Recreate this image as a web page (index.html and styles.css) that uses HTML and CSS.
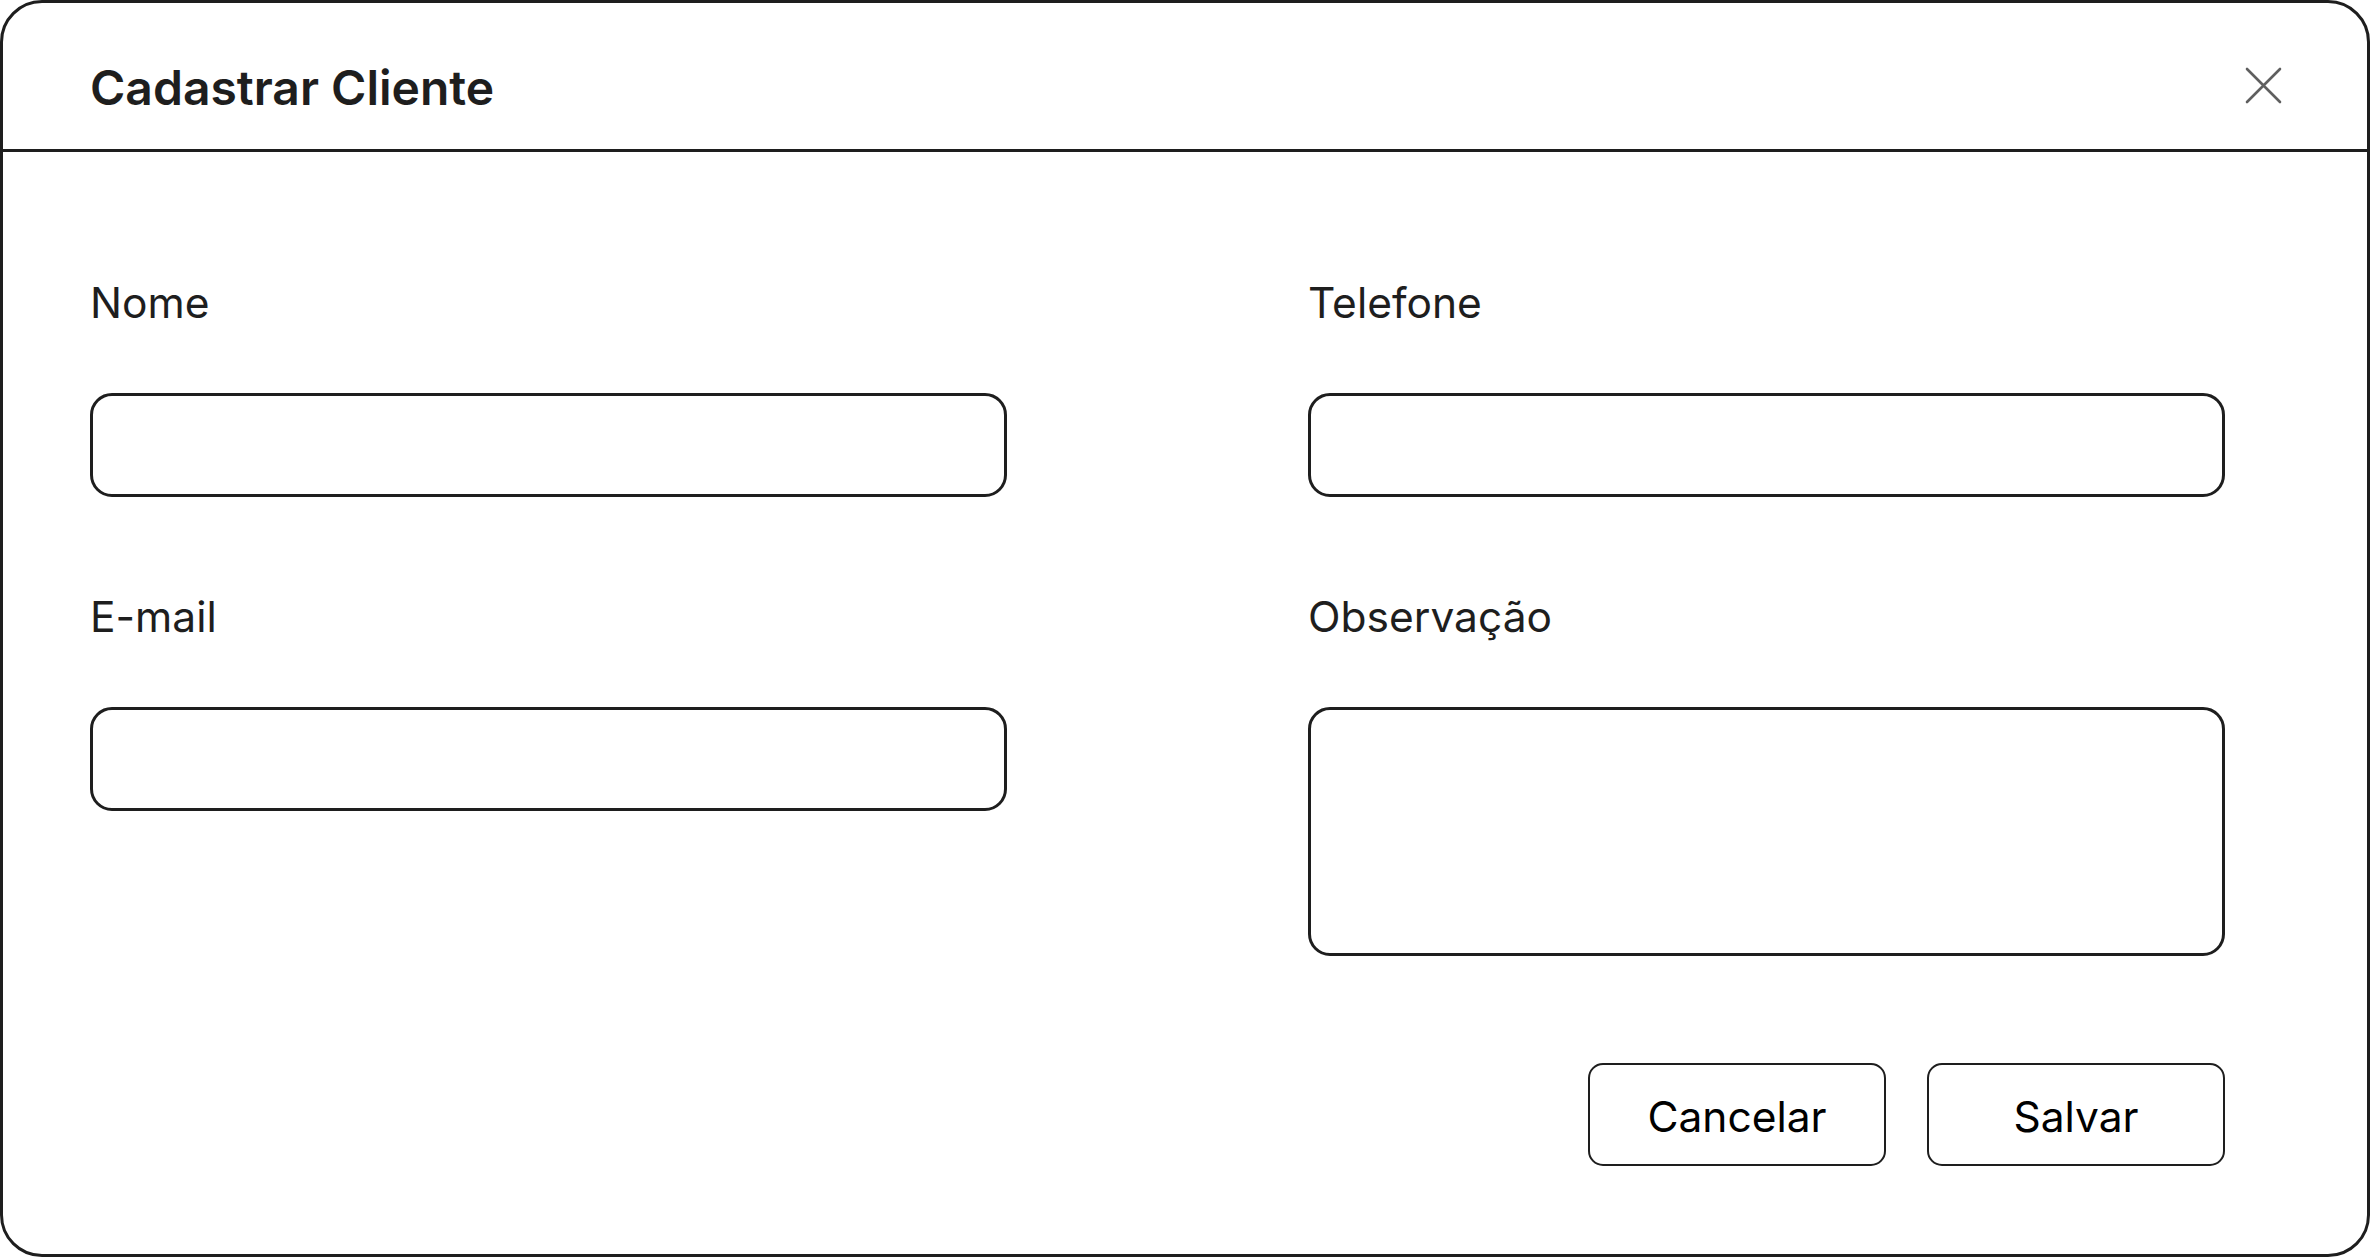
FILE: index.html
```html
<!DOCTYPE html>
<html lang="pt-BR">
<head>
<meta charset="utf-8">
<title>Cadastrar Cliente</title>
<link rel="stylesheet" href="styles.css">
</head>
<body>
<div class="modal">
  <header class="modal-header">
    <h1 class="modal-title">Cadastrar Cliente</h1>
    <button class="close-btn" type="button" aria-label="Fechar">
      <svg width="37" height="37" viewBox="0 0 37 37" fill="none">
        <path d="M2 2L35 35M35 2L2 35" stroke="#5f5f5f" stroke-width="2.6" stroke-linecap="round"/>
      </svg>
    </button>
  </header>
  <form class="modal-body">
    <div class="fields">
      <div class="field">
        <label class="field-label" for="nome">Nome</label>
        <input class="field-input" id="nome" type="text">
      </div>
      <div class="field">
        <label class="field-label" for="telefone">Telefone</label>
        <input class="field-input" id="telefone" type="tel">
      </div>
      <div class="field">
        <label class="field-label" for="email">E-mail</label>
        <input class="field-input" id="email" type="email">
      </div>
      <div class="field">
        <label class="field-label" for="obs">Observação</label>
        <textarea class="field-input field-textarea" id="obs"></textarea>
      </div>
    </div>
    <div class="actions">
      <button class="btn" type="button">Cancelar</button>
      <button class="btn" type="submit">Salvar</button>
    </div>
  </form>
</div>
</body>
</html>
```
FILE: styles.css
```css
html, body {
  margin: 0;
  height: 100%;
}

body {
  font-family: Inter, "Noto Sans", "Liberation Sans", sans-serif;
  background: #ffffff;
  color: #1e1e1e;
}

.modal {
  box-sizing: border-box;
  height: 100vh;
  border: 3px solid #1e1e1e;
  border-radius: 42px;
  display: flex;
  flex-direction: column;
  overflow: hidden;
  background: #ffffff;
}

.modal-header {
  box-sizing: border-box;
  height: 149px;
  flex-shrink: 0;
  border-bottom: 3px solid #1e1e1e;
  padding: 56px 85px 0 87px;
  display: flex;
  justify-content: space-between;
  align-items: flex-start;
}

.modal-title {
  margin: 0;
  font-size: 48px;
  font-weight: 600;
  line-height: 58px;
  color: #1e1e1e;
}

.close-btn {
  margin-top: 8px;
  width: 37px;
  height: 37px;
  padding: 0;
  border: 0;
  background: none;
  display: block;
  cursor: pointer;
}

.close-btn svg {
  display: block;
}

.modal-body {
  padding: 125px 142px 0 87px;
}

.fields {
  display: grid;
  grid-template-columns: 1fr 1fr;
  column-gap: 301px;
  row-gap: 94px;
  align-items: start;
}

.field {
  display: flex;
  flex-direction: column;
  gap: 64px;
}

.field-label {
  font-size: 42.5px;
  line-height: 52px;
  color: #1e1e1e;
}

.field-input {
  box-sizing: border-box;
  height: 104px;
  width: 100%;
  margin: 0;
  border: 3px solid #1e1e1e;
  border-radius: 22px;
  padding: 0 24px;
  font-family: inherit;
  font-size: 36px;
  color: #1e1e1e;
  background: #ffffff;
  outline: none;
}

.field-textarea {
  height: 249px;
  padding: 20px 24px;
  resize: none;
  display: block;
}

.actions {
  display: flex;
  justify-content: flex-end;
  gap: 41px;
  margin-top: 107px;
}

.btn {
  box-sizing: border-box;
  width: 298px;
  height: 103px;
  margin: 0;
  border: 2px solid #1e1e1e;
  border-radius: 15px;
  background: #ffffff;
  font-family: Inter, "Noto Sans", "Liberation Sans", sans-serif;
  font-size: 42.5px;
  color: #000000;
  padding: 3px 0 0;
  cursor: pointer;
}
```
